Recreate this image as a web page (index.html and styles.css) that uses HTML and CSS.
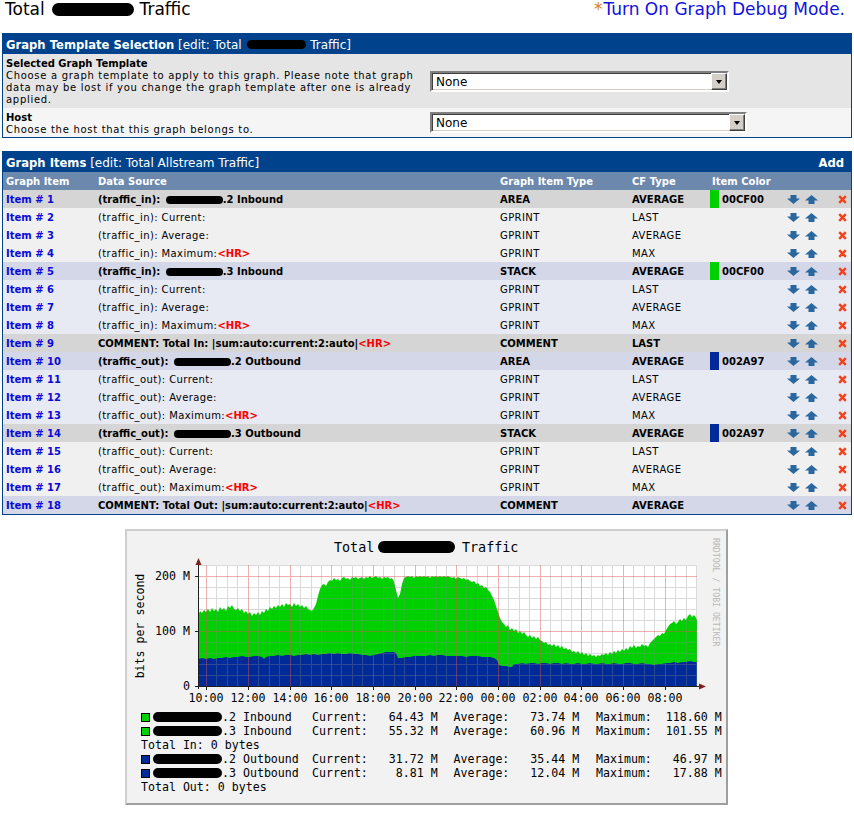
FILE: index.html
```html
<!DOCTYPE html>
<html>
<head>
<meta charset="utf-8">
<title>Graph Management</title>
<link rel="stylesheet" href="styles.css">
</head>
<body>
<svg class="sprite" width="0" height="0">
  <symbol id="i-down" viewBox="0 0 13 9"><path d="M3.5 0H9.5V3.5H13L6.5 9L0 3.5H3.5Z"/></symbol>
  <symbol id="i-up" viewBox="0 0 13 9"><path d="M6.5 0L13 5.5H9.5V9H3.5V5.5H0Z"/></symbol>
  <symbol id="i-del" viewBox="0 0 9 9"><path d="M1.2 1.2L7.8 7.8M7.8 1.2L1.2 7.8"/></symbol>
</svg>

<div class="top">
  <div class="page-title">Total <span class="blob blob-title"></span> Traffic</div>
  <a class="debug" href="#"><span class="star">*</span>Turn On Graph Debug Mode.</a>
</div>

<div class="panel panel-template">
  <div class="panel-head"><b>Graph Template Selection</b> [edit: Total <span class="blob blob-head"></span> Traffic]</div>
  <div class="form-row form-alt2 form-tall">
    <div class="form-label">
      <b>Selected Graph Template</b>
      <p>Choose a graph template to apply to this graph. Please note that graph data may be lost if you change the graph template after one is already applied.</p>
    </div>
    <div class="form-field">
      <div class="select sel-template"><span class="select-text">None</span><span class="select-btn"></span></div>
    </div>
  </div>
  <div class="form-row form-alt1 form-short">
    <div class="form-label">
      <b>Host</b>
      <p>Choose the host that this graph belongs to.</p>
    </div>
    <div class="form-field">
      <div class="select sel-host"><span class="select-text">None</span><span class="select-btn"></span></div>
    </div>
  </div>
</div>

<div class="panel panel-items">
  <div class="panel-head items-head"><span><b>Graph Items</b> [edit: Total Allstream Traffic]</span><a class="add" href="#">Add</a></div>
  <div class="grid-row colhead">
    <span class="c1">Graph Item</span>
    <span class="c2">Data Source</span>
    <span class="c3">Graph Item Type</span>
    <span class="c4">CF Type</span>
    <span class="c56">Item Color</span>
    <span></span>
    <span></span>
  </div>

  <div class="grid-row item main r-gray">
    <a class="c1 item-link" href="#">Item # 1</a>
    <span class="c2">(traffic_in): <span class="blob blob-ds"></span>.2 Inbound</span>
    <span class="c3">AREA</span><span class="c4">AVERAGE</span>
    <span class="sw sw-green"></span><span class="hex">00CF00</span>
    <span class="moves"><svg class="ico-move"><use href="#i-down"/></svg><svg class="ico-move"><use href="#i-up"/></svg></span>
    <span class="del"><svg class="ico-del"><use href="#i-del"/></svg></span>
  </div>
  <div class="grid-row item r-lgray">
    <a class="c1 item-link" href="#">Item # 2</a>
    <span class="c2">(traffic_in): Current:</span>
    <span class="c3">GPRINT</span><span class="c4">LAST</span>
    <span class="sw"></span><span class="hex"></span>
    <span class="moves"><svg class="ico-move"><use href="#i-down"/></svg><svg class="ico-move"><use href="#i-up"/></svg></span>
    <span class="del"><svg class="ico-del"><use href="#i-del"/></svg></span>
  </div>
  <div class="grid-row item r-lgray">
    <a class="c1 item-link" href="#">Item # 3</a>
    <span class="c2">(traffic_in): Average:</span>
    <span class="c3">GPRINT</span><span class="c4">AVERAGE</span>
    <span class="sw"></span><span class="hex"></span>
    <span class="moves"><svg class="ico-move"><use href="#i-down"/></svg><svg class="ico-move"><use href="#i-up"/></svg></span>
    <span class="del"><svg class="ico-del"><use href="#i-del"/></svg></span>
  </div>
  <div class="grid-row item r-lgray">
    <a class="c1 item-link" href="#">Item # 4</a>
    <span class="c2">(traffic_in): Maximum:<b class="hr">&lt;HR&gt;</b></span>
    <span class="c3">GPRINT</span><span class="c4">MAX</span>
    <span class="sw"></span><span class="hex"></span>
    <span class="moves"><svg class="ico-move"><use href="#i-down"/></svg><svg class="ico-move"><use href="#i-up"/></svg></span>
    <span class="del"><svg class="ico-del"><use href="#i-del"/></svg></span>
  </div>
  <div class="grid-row item main r-blue">
    <a class="c1 item-link" href="#">Item # 5</a>
    <span class="c2">(traffic_in): <span class="blob blob-ds"></span>.3 Inbound</span>
    <span class="c3">STACK</span><span class="c4">AVERAGE</span>
    <span class="sw sw-green"></span><span class="hex">00CF00</span>
    <span class="moves"><svg class="ico-move"><use href="#i-down"/></svg><svg class="ico-move"><use href="#i-up"/></svg></span>
    <span class="del"><svg class="ico-del"><use href="#i-del"/></svg></span>
  </div>
  <div class="grid-row item r-lblue">
    <a class="c1 item-link" href="#">Item # 6</a>
    <span class="c2">(traffic_in): Current:</span>
    <span class="c3">GPRINT</span><span class="c4">LAST</span>
    <span class="sw"></span><span class="hex"></span>
    <span class="moves"><svg class="ico-move"><use href="#i-down"/></svg><svg class="ico-move"><use href="#i-up"/></svg></span>
    <span class="del"><svg class="ico-del"><use href="#i-del"/></svg></span>
  </div>
  <div class="grid-row item r-lblue">
    <a class="c1 item-link" href="#">Item # 7</a>
    <span class="c2">(traffic_in): Average:</span>
    <span class="c3">GPRINT</span><span class="c4">AVERAGE</span>
    <span class="sw"></span><span class="hex"></span>
    <span class="moves"><svg class="ico-move"><use href="#i-down"/></svg><svg class="ico-move"><use href="#i-up"/></svg></span>
    <span class="del"><svg class="ico-del"><use href="#i-del"/></svg></span>
  </div>
  <div class="grid-row item r-lblue">
    <a class="c1 item-link" href="#">Item # 8</a>
    <span class="c2">(traffic_in): Maximum:<b class="hr">&lt;HR&gt;</b></span>
    <span class="c3">GPRINT</span><span class="c4">MAX</span>
    <span class="sw"></span><span class="hex"></span>
    <span class="moves"><svg class="ico-move"><use href="#i-down"/></svg><svg class="ico-move"><use href="#i-up"/></svg></span>
    <span class="del"><svg class="ico-del"><use href="#i-del"/></svg></span>
  </div>
  <div class="grid-row item main r-gray">
    <a class="c1 item-link" href="#">Item # 9</a>
    <span class="c2">COMMENT: Total In: |sum:auto:current:2:auto|<span class="hr">&lt;HR&gt;</span></span>
    <span class="c3">COMMENT</span><span class="c4">LAST</span>
    <span class="sw"></span><span class="hex"></span>
    <span class="moves"><svg class="ico-move"><use href="#i-down"/></svg><svg class="ico-move"><use href="#i-up"/></svg></span>
    <span class="del"><svg class="ico-del"><use href="#i-del"/></svg></span>
  </div>
  <div class="grid-row item main r-blue">
    <a class="c1 item-link" href="#">Item # 10</a>
    <span class="c2">(traffic_out): <span class="blob blob-ds"></span>.2 Outbound</span>
    <span class="c3">AREA</span><span class="c4">AVERAGE</span>
    <span class="sw sw-blue"></span><span class="hex">002A97</span>
    <span class="moves"><svg class="ico-move"><use href="#i-down"/></svg><svg class="ico-move"><use href="#i-up"/></svg></span>
    <span class="del"><svg class="ico-del"><use href="#i-del"/></svg></span>
  </div>
  <div class="grid-row item r-lblue">
    <a class="c1 item-link" href="#">Item # 11</a>
    <span class="c2">(traffic_out): Current:</span>
    <span class="c3">GPRINT</span><span class="c4">LAST</span>
    <span class="sw"></span><span class="hex"></span>
    <span class="moves"><svg class="ico-move"><use href="#i-down"/></svg><svg class="ico-move"><use href="#i-up"/></svg></span>
    <span class="del"><svg class="ico-del"><use href="#i-del"/></svg></span>
  </div>
  <div class="grid-row item r-lblue">
    <a class="c1 item-link" href="#">Item # 12</a>
    <span class="c2">(traffic_out): Average:</span>
    <span class="c3">GPRINT</span><span class="c4">AVERAGE</span>
    <span class="sw"></span><span class="hex"></span>
    <span class="moves"><svg class="ico-move"><use href="#i-down"/></svg><svg class="ico-move"><use href="#i-up"/></svg></span>
    <span class="del"><svg class="ico-del"><use href="#i-del"/></svg></span>
  </div>
  <div class="grid-row item r-lblue">
    <a class="c1 item-link" href="#">Item # 13</a>
    <span class="c2">(traffic_out): Maximum:<b class="hr">&lt;HR&gt;</b></span>
    <span class="c3">GPRINT</span><span class="c4">MAX</span>
    <span class="sw"></span><span class="hex"></span>
    <span class="moves"><svg class="ico-move"><use href="#i-down"/></svg><svg class="ico-move"><use href="#i-up"/></svg></span>
    <span class="del"><svg class="ico-del"><use href="#i-del"/></svg></span>
  </div>
  <div class="grid-row item main r-gray">
    <a class="c1 item-link" href="#">Item # 14</a>
    <span class="c2">(traffic_out): <span class="blob blob-ds"></span>.3 Outbound</span>
    <span class="c3">STACK</span><span class="c4">AVERAGE</span>
    <span class="sw sw-blue"></span><span class="hex">002A97</span>
    <span class="moves"><svg class="ico-move"><use href="#i-down"/></svg><svg class="ico-move"><use href="#i-up"/></svg></span>
    <span class="del"><svg class="ico-del"><use href="#i-del"/></svg></span>
  </div>
  <div class="grid-row item r-lgray">
    <a class="c1 item-link" href="#">Item # 15</a>
    <span class="c2">(traffic_out): Current:</span>
    <span class="c3">GPRINT</span><span class="c4">LAST</span>
    <span class="sw"></span><span class="hex"></span>
    <span class="moves"><svg class="ico-move"><use href="#i-down"/></svg><svg class="ico-move"><use href="#i-up"/></svg></span>
    <span class="del"><svg class="ico-del"><use href="#i-del"/></svg></span>
  </div>
  <div class="grid-row item r-lgray">
    <a class="c1 item-link" href="#">Item # 16</a>
    <span class="c2">(traffic_out): Average:</span>
    <span class="c3">GPRINT</span><span class="c4">AVERAGE</span>
    <span class="sw"></span><span class="hex"></span>
    <span class="moves"><svg class="ico-move"><use href="#i-down"/></svg><svg class="ico-move"><use href="#i-up"/></svg></span>
    <span class="del"><svg class="ico-del"><use href="#i-del"/></svg></span>
  </div>
  <div class="grid-row item r-lgray">
    <a class="c1 item-link" href="#">Item # 17</a>
    <span class="c2">(traffic_out): Maximum:<b class="hr">&lt;HR&gt;</b></span>
    <span class="c3">GPRINT</span><span class="c4">MAX</span>
    <span class="sw"></span><span class="hex"></span>
    <span class="moves"><svg class="ico-move"><use href="#i-down"/></svg><svg class="ico-move"><use href="#i-up"/></svg></span>
    <span class="del"><svg class="ico-del"><use href="#i-del"/></svg></span>
  </div>
  <div class="grid-row item main r-blue">
    <a class="c1 item-link" href="#">Item # 18</a>
    <span class="c2">COMMENT: Total Out: |sum:auto:current:2:auto|<span class="hr">&lt;HR&gt;</span></span>
    <span class="c3">COMMENT</span><span class="c4">AVERAGE</span>
    <span class="sw"></span><span class="hex"></span>
    <span class="moves"><svg class="ico-move"><use href="#i-down"/></svg><svg class="ico-move"><use href="#i-up"/></svg></span>
    <span class="del"><svg class="ico-del"><use href="#i-del"/></svg></span>
  </div>
</div>

<div class="graph">
  <svg class="chart" width="599" height="178" viewBox="127 531 599 178">
    <text class="g-title" x="334" y="552">Total</text>
    <rect x="378" y="541" width="77" height="12" rx="6" fill="#000"/>
    <text class="g-title" x="462" y="552">Traffic</text>
    <text class="g-vlabel" x="144" y="626" transform="rotate(-90 144 626)" text-anchor="middle">bits per second</text>
    <text class="g-wm" x="713" y="538" transform="rotate(90 713 538)">RRDTOOL / TOBI OETIKER</text>

    <rect x="198" y="565" width="499" height="121" fill="#fff"/>
    <polygon fill="#00CF00" points="198,616 200,611 202,613 204,610 206,612 208,609 210,612 212,608 214,611 216,609 218,612 220,607 222,610 224,608 226,611 228,606 230,608 232,605 234,609 236,610 238,608 240,611 242,609 244,613 246,611 248,614 250,612 252,616 254,613 256,615 258,612 260,615 262,611 264,613 266,609 268,611 270,607 272,609 274,606 276,608 278,605 280,607 282,604 284,607 286,603 288,605 290,604 292,607 294,603 296,606 298,604 300,607 302,605 304,608 306,606 308,609 310,610 312,611 314,608 316,604 318,596 320,589 322,585 324,584 326,586 328,582 330,580 332,581 334,578 336,580 338,579 340,581 342,578 344,577 346,579 348,578 350,580 352,577 354,578 356,577 358,579 360,578 362,577 364,579 366,577 368,578 370,576 372,578 374,577 376,576 378,578 380,577 382,579 384,577 386,578 388,577 390,579 392,578 394,582 396,590 398,598 400,594 402,584 404,578 406,577 408,576 410,577 412,576 414,578 416,576 418,577 420,576 422,577 424,576 426,577 428,576 430,578 432,576 434,577 436,576 438,577 440,576 442,577 444,576 446,577 448,576 450,577 452,578 454,577 456,579 458,577 460,578 462,579 464,578 466,580 468,579 470,581 472,582 474,581 476,584 478,583 480,586 482,585 484,588 486,587 488,590 490,592 492,596 494,600 496,606 498,612 500,618 502,622 504,624 506,627 508,625 510,630 512,628 514,631 516,629 518,633 520,631 522,634 524,632 526,635 528,637 530,635 532,638 534,636 536,639 538,637 540,640 542,641 544,643 546,642 548,645 550,644 552,646 554,644 556,647 558,645 560,648 562,646 564,649 566,648 568,650 570,649 572,652 574,651 576,653 578,651 580,654 582,652 584,655 586,653 588,656 590,654 592,656 594,655 596,657 598,655 600,656 602,654 604,655 606,653 608,655 610,652 612,654 614,651 616,653 618,650 620,652 622,649 624,651 626,648 628,650 630,646 632,648 634,645 636,648 638,646 640,647 642,644 644,646 646,645 648,647 650,643 652,641 654,639 656,637 658,635 660,636 662,633 664,634 666,630 668,627 670,624 672,623 674,621 676,624 678,622 680,619 682,621 684,618 686,620 688,616 690,614 692,617 694,615 696,618 697,620 697,686 198,686"/>
    <polygon fill="#002A97" points="198,686 198,659 202,658 206,659 210,658 214,659 218,658 222,658 226,657 230,658 234,657 238,657 242,656 246,657 250,657 254,656 258,656 262,657 264,659 266,657 270,656 274,656 278,655 282,656 286,655 290,655 294,656 298,655 302,655 306,654 310,655 314,654 318,655 322,654 326,654 330,653 334,654 338,653 342,654 346,654 350,653 354,654 358,654 362,655 366,655 370,656 374,655 378,654 382,653 386,652 390,652 394,652 396,653 398,658 402,658 406,657 410,657 414,656 418,656 422,656 426,656 430,655 434,656 438,655 442,655 446,656 450,656 454,656 458,656 462,656 466,657 470,656 474,656 478,656 482,657 486,657 490,657 494,658 497,660 499,665 502,666 506,666 510,667 512,667 514,664 518,664 522,663 526,664 530,663 534,663 538,664 542,663 546,663 550,664 554,663 558,663 562,664 566,663 570,664 574,664 578,663 582,664 586,664 590,663 594,664 598,664 602,663 606,664 610,664 614,663 618,664 622,664 626,663 630,663 634,664 638,664 642,663 646,664 650,664 654,665 658,664 662,664 666,663 670,663 674,662 678,663 682,662 686,662 690,661 694,662 697,662 697,686"/>

    <path class="g-minor" d="M216.5 565V686M227.5 565V686M237.5 565V686M258.5 565V686M269.5 565V686M279.5 565V686M300.5 565V686M311.5 565V686M321.5 565V686M341.5 565V686M352.5 565V686M362.5 565V686M383.5 565V686M394.5 565V686M404.5 565V686M425.5 565V686M436.5 565V686M446.5 565V686M466.5 565V686M477.5 565V686M487.5 565V686M508.5 565V686M519.5 565V686M529.5 565V686M550.5 565V686M561.5 565V686M571.5 565V686M591.5 565V686M602.5 565V686M612.5 565V686M633.5 565V686M644.5 565V686M654.5 565V686M675.5 565V686M686.5 565V686M696.5 565V686M198 565.5H697M198 587.5H697M198 598.5H697M198 609.5H697M198 620.5H697M198 642.5H697M198 653.5H697M198 664.5H697M198 675.5H697"/>
    <path class="g-major" d="M206.5 565V686M248.5 565V686M290.5 565V686M331.5 565V686M373.5 565V686M415.5 565V686M456.5 565V686M498.5 565V686M540.5 565V686M581.5 565V686M623.5 565V686M665.5 565V686M198 576.5H697M198 631.5H697"/>
    <path class="g-axis" d="M198.5 562V689M195 686.5H701M195 576.5H198M195 631.5H198M206.5 686V690M248.5 686V690M290.5 686V690M331.5 686V690M373.5 686V690M415.5 686V690M456.5 686V690M498.5 686V690M540.5 686V690M581.5 686V690M623.5 686V690M665.5 686V690"/>
    <polygon class="g-arrow" points="195.5,565 198.5,558 201.5,565"/>
    <polygon class="g-arrow" points="699,683.5 706,686.5 699,689.5"/>

    <text class="g-lbl" x="190" y="580" text-anchor="end">200 M</text>
    <text class="g-lbl" x="190" y="635" text-anchor="end">100 M</text>
    <text class="g-lbl" x="190" y="690" text-anchor="end">0</text>

    <text class="g-lbl" x="206" y="702" text-anchor="middle">10:00</text>
    <text class="g-lbl" x="248" y="702" text-anchor="middle">12:00</text>
    <text class="g-lbl" x="290" y="702" text-anchor="middle">14:00</text>
    <text class="g-lbl" x="331" y="702" text-anchor="middle">16:00</text>
    <text class="g-lbl" x="373" y="702" text-anchor="middle">18:00</text>
    <text class="g-lbl" x="415" y="702" text-anchor="middle">20:00</text>
    <text class="g-lbl" x="456" y="702" text-anchor="middle">22:00</text>
    <text class="g-lbl" x="498" y="702" text-anchor="middle">00:00</text>
    <text class="g-lbl" x="540" y="702" text-anchor="middle">02:00</text>
    <text class="g-lbl" x="581" y="702" text-anchor="middle">04:00</text>
    <text class="g-lbl" x="623" y="702" text-anchor="middle">06:00</text>
    <text class="g-lbl" x="665" y="702" text-anchor="middle">08:00</text>
  </svg>

  <div class="legend">
    <div class="lg-row"><span class="lg-sw sw-green"></span><span class="blob blob-lg"></span><span class="lg-name">.2 Inbound</span><span class="lg-col lg-cur">Current:   64.43 M</span><span class="lg-col lg-avg">Average:   73.74 M</span><span class="lg-col">Maximum:  118.60 M</span></div>
    <div class="lg-row"><span class="lg-sw sw-green"></span><span class="blob blob-lg"></span><span class="lg-name">.3 Inbound</span><span class="lg-col lg-cur">Current:   55.32 M</span><span class="lg-col lg-avg">Average:   60.96 M</span><span class="lg-col">Maximum:  101.55 M</span></div>
    <div class="lg-row">Total In: 0 bytes</div>
    <div class="lg-row"><span class="lg-sw sw-blue"></span><span class="blob blob-lg"></span><span class="lg-name">.2 Outbound</span><span class="lg-col lg-cur">Current:   31.72 M</span><span class="lg-col lg-avg">Average:   35.44 M</span><span class="lg-col">Maximum:   46.97 M</span></div>
    <div class="lg-row"><span class="lg-sw sw-blue"></span><span class="blob blob-lg"></span><span class="lg-name">.3 Outbound</span><span class="lg-col lg-cur">Current:    8.81 M</span><span class="lg-col lg-avg">Average:   12.04 M</span><span class="lg-col">Maximum:   17.88 M</span></div>
    <div class="lg-row">Total Out: 0 bytes</div>
  </div>
</div>
</body>
</html>
```

FILE: styles.css
```css
* { box-sizing: border-box; }

html, body {
  margin: 0;
  padding: 0;
  background: #ffffff;
}

body {
  width: 854px;
  padding: 0 2px;
  font-family: "DejaVu Sans", Verdana, sans-serif;
  color: #000000;
}

.sprite {
  display: block;
  width: 0;
  height: 0;
  overflow: hidden;
}

/* ---------- top line ---------- */
.top {
  height: 33px;
  display: flex;
  justify-content: space-between;
  align-items: flex-start;
  padding: 0 7px 0 3px;
}

.page-title,
.debug {
  font-size: 17px;
  line-height: 19px;
  white-space: nowrap;
}

.debug {
  color: #1111dd;
  text-decoration: none;
}

.star {
  color: #d67e1e;
  margin-right: 1px;
}

/* redacted blobs */
.blob {
  display: inline-block;
  background: #000000;
}

.blob-title {
  width: 82px;
  height: 13px;
  border-radius: 7px;
  margin-left: 2px;
  vertical-align: -1px;
}

.blob-head {
  width: 59px;
  height: 9px;
  border-radius: 5px;
  margin-left: 2px;
  vertical-align: 0;
}

.blob-ds {
  width: 57px;
  height: 8px;
  border-radius: 4px;
  margin-left: 2px;
  vertical-align: -1px;
}

.blob-lg {
  width: 69px;
  height: 10px;
  border-radius: 5px;
  flex: none;
}

/* ---------- panels ---------- */
.panel {
  width: 850px;
  border: 1px solid #00438c;
}

.panel-template {
  margin-bottom: 13px;
}

.panel-head {
  height: 20px;
  line-height: 22px;
  background: #00438c;
  color: #ffffff;
  font-size: 12px;
  padding: 0 7px 0 3px;
  white-space: nowrap;
}

.panel-head b {
  font-size: 11.6px;
}

.items-head {
  display: flex;
  justify-content: space-between;
}

.add {
  color: #ffffff;
  font-weight: bold;
  font-size: 11.6px;
  text-decoration: none;
}

/* ---------- form rows ---------- */
.form-row {
  display: grid;
  grid-template-columns: 425px 1fr;
  align-items: center;
}

.form-alt2 { background: #e5e5e5; }
.form-alt1 { background: #f5f5f5; }

.form-tall { height: 54px; }
.form-short { height: 29px; }

.form-label {
  align-self: start;
  padding: 4px 3px 0 3px;
  font-size: 10px;
  line-height: 12px;
}

.form-label b {
  display: block;
}

.form-label p {
  margin: 0;
  letter-spacing: 0.7px;
}

.form-field {
  padding-left: 2px;
}

.select {
  height: 21px;
  display: flex;
  align-items: center;
  background: #ffffff;
  border: 2px solid;
  border-color: #808080 #ffffff #ffffff #808080;
  box-shadow: inset 1px 1px 0 #404040, inset -1px -1px 0 #d4d0c8;
}

.sel-template { width: 299px; }
.sel-host { width: 317px; }

.select-text {
  padding-left: 4px;
  padding-top: 1px;
  font-size: 12px;
  font-family: "DejaVu Sans", Verdana, sans-serif;
}

.select-btn {
  margin-left: auto;
  width: 16px;
  height: 17px;
  background: #d4d0c8;
  border: 1px solid;
  border-color: #ffffff #404040 #404040 #ffffff;
  box-shadow: inset -1px -1px 0 #808080;
  display: flex;
  align-items: center;
  justify-content: center;
}

.select-btn::after {
  content: "";
  display: block;
  width: 0;
  height: 0;
  border-top: 4px solid #000000;
  border-left: 3.5px solid transparent;
  border-right: 3.5px solid transparent;
  margin-top: 1px;
}

/* ---------- graph items ---------- */
.grid-row {
  display: grid;
  grid-template-columns: 92px 402px 132px 80px 10px 65px 46px 21px;
  grid-template-rows: 18px;
  height: 18px;
  align-items: stretch;
  font-size: 10px;
  line-height: 20px;
  white-space: nowrap;
}

.colhead {
  background: #6d88ad;
  color: #ffffff;
  font-weight: bold;
}

.colhead .c56 {
  grid-column: 5 / span 2;
  padding-left: 3px;
}

.c1, .c2, .c3, .c4 {
  padding-left: 3px;
}

.item .c2,
.item .c3,
.item .c4 {
  letter-spacing: 0.4px;
}

.item.main .c2,
.item.main .c3,
.item.main .c4,
.item.main .hex {
  font-weight: bold;
  letter-spacing: 0;
}

.r-gray  { background: #d5d5d5; }
.r-lgray { background: #f0f0f0; }
.r-blue  { background: #d3d7e8; }
.r-lblue { background: #e7e9f3; }

.item-link {
  color: #0a0ad8;
  font-weight: bold;
  text-decoration: none;
}

.hr {
  color: #ff0000;
  font-weight: bold;
  letter-spacing: 0;
}

.sw {
  width: 9px;
  margin-left: 1px;
}

.sw-green { background: #00cf00; }
.sw-blue  { background: #002a97; }

.hex {
  padding-left: 3px;
}

.moves {
  display: flex;
  align-items: center;
  gap: 5px;
  padding-left: 3px;
}

.ico-move {
  display: block;
  width: 13px;
  height: 9px;
  fill: #2a679e;
}

.del {
  display: flex;
  align-items: center;
  padding-left: 8px;
}

.ico-del {
  display: block;
  width: 9px;
  height: 9px;
  fill: none;
  stroke: #f5401c;
  stroke-width: 2.4;
}

/* ---------- rrd graph ---------- */
.graph {
  width: 603px;
  height: 276px;
  margin: 14px 0 0 123px;
  background: #f2f2f2;
  border: 2px solid;
  border-color: #cfcfcf #9e9e9e #9e9e9e #cfcfcf;
}

.chart {
  display: block;
}

.chart text {
  font-family: "DejaVu Sans Mono", "Liberation Mono", monospace;
  fill: #000000;
}

.chart .g-title { font-size: 13.4px; }
.chart .g-vlabel { font-size: 11.6px; }
.chart .g-lbl { font-size: 11.6px; }
.chart .g-wm {
  font-size: 8.2px;
  fill: #b8b8b8;
}

.g-minor {
  fill: none;
  stroke: rgba(140, 140, 140, 0.32);
  stroke-width: 1;
  shape-rendering: crispEdges;
}

.g-major {
  fill: none;
  stroke: rgba(222, 79, 79, 0.45);
  stroke-width: 1;
  shape-rendering: crispEdges;
}

.g-axis {
  fill: none;
  stroke: #1f1f1f;
  stroke-width: 1;
  shape-rendering: crispEdges;
}

.g-arrow {
  fill: #801f1f;
}

.legend {
  padding: 1px 0 0 14px;
  font-family: "DejaVu Sans Mono", "Liberation Mono", monospace;
  font-size: 11.6px;
  line-height: 14px;
}

.lg-row {
  height: 14px;
  display: flex;
  align-items: center;
  white-space: pre;
}

.lg-sw {
  flex: none;
  width: 9px;
  height: 9px;
  border: 1px solid #000000;
  margin-right: 3px;
}

.lg-name {
  flex: none;
  width: 90px;
}

.lg-col {
  flex: none;
}

.lg-cur { width: 141.5px; }
.lg-avg { width: 142.5px; }
```
